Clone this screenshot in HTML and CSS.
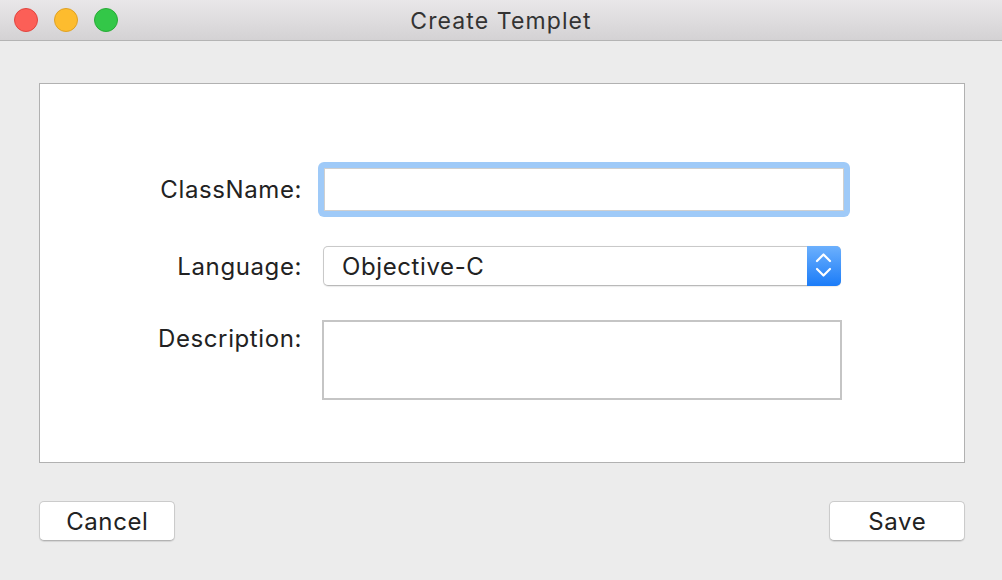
FILE: index.html
```html
<!DOCTYPE html>
<html>
<head>
<meta charset="utf-8">
<link rel="stylesheet" href="styles.css">
</head>
<body>
<div class="window">
  <div class="titlebar">
    <div class="lights">
      <span class="light red"></span>
      <span class="light yellow"></span>
      <span class="light green"></span>
    </div>
    <div class="title">Create Templet</div>
  </div>
  <div class="content">
    <div class="panel">
      <div class="row row-class">
        <div class="label">ClassName:</div>
        <div class="focus-ring"><div class="text-field"></div></div>
      </div>
      <div class="row row-lang">
        <div class="label">Language:</div>
        <div class="popup">
          <span class="popup-text">Objective-C</span>
          <span class="stepper">
            <svg width="34" height="39" viewBox="0 0 34 39">
              <polyline points="10,15 16.5,8.5 23,15" fill="none" stroke="#fff" stroke-width="2.2" stroke-linecap="round" stroke-linejoin="round"/>
              <polyline points="10,23 16.5,29.5 23,23" fill="none" stroke="#fff" stroke-width="2.2" stroke-linecap="round" stroke-linejoin="round"/>
            </svg>
          </span>
        </div>
      </div>
      <div class="row row-desc">
        <div class="label label-top">Description:</div>
        <div class="textarea"></div>
      </div>
    </div>
    <div class="buttons">
      <div class="button">Cancel</div>
      <div class="button">Save</div>
    </div>
  </div>
</div>
</body>
</html>
```
FILE: styles.css
```css
* { box-sizing: border-box; }
html, body {
  margin: 0;
  padding: 0;
  width: 1002px;
  height: 580px;
  overflow: hidden;
  background: #ececec;
  font-family: Inter, "Liberation Sans", sans-serif;
  color: #222;
}
.window {
  width: 1002px;
  height: 580px;
  display: flex;
  flex-direction: column;
  background: #ececec;
}
.titlebar {
  height: 41px;
  flex: none;
  position: relative;
  background: linear-gradient(#e9e7e9, #d4d2d4);
  border-bottom: 1px solid #b4b4b4;
  display: flex;
  align-items: center;
  justify-content: center;
}
.lights {
  position: absolute;
  left: 14px;
  top: 8px;
  display: flex;
  gap: 16px;
}
.light {
  width: 24px;
  height: 24px;
  border-radius: 50%;
  display: block;
}
.red { background: #fc5f57; border: 1px solid #e1453f; }
.yellow { background: #fdbc2e; border: 1px solid #dfa124; }
.green { background: #33c748; border: 1px solid #28ab36; }
.title {
  font-size: 23px;
  letter-spacing: 1.1px;
  color: #333;
  margin-top: 1px;
}
.content {
  flex: 1;
  padding: 42px 37px 0 39px;
  display: flex;
  flex-direction: column;
}
.panel {
  height: 380px;
  background: #fff;
  border: 1px solid #b1b1b1;
  padding-top: 78px;
  display: flex;
  flex-direction: column;
}
.row {
  display: flex;
}
.label {
  width: 262px;
  text-align: right;
  font-size: 24px;
  letter-spacing: 0.6px;
  flex: none;
}
.row-class { align-items: center; }
.row-lang { align-items: center; margin-top: 29px; }
.row-desc { margin-top: 34px; }
.focus-ring {
  margin-left: 16px;
  width: 532px;
  height: 55px;
  background: #9fcaf8;
  border-radius: 6px;
  padding: 6px;
}
.text-field {
  width: 100%;
  height: 100%;
  background: #fff;
  border: 1px solid #cfcfcf;
}
.popup {
  margin-left: 21px;
  width: 518px;
  height: 40px;
  border: 1px solid #c9c9c9;
  border-bottom-color: #b9b9b9;
  border-radius: 5px;
  background: #fff;
  display: flex;
  align-items: center;
  justify-content: space-between;
  box-shadow: 0 0.5px 1px rgba(0,0,0,0.08);
}
.popup-text {
  font-size: 24px;
  letter-spacing: 0.6px;
  padding-left: 18px;
}
.stepper {
  width: 34px;
  height: 40px;
  margin: -1px -1px -1px 0;
  border-radius: 0 5px 5px 0;
  background: linear-gradient(#6cb0fd, #1b7cf8);
  display: flex;
}
.label-top {
  padding-top: 4px;
}
.textarea {
  margin-left: 20px;
  width: 520px;
  height: 80px;
  border: 2px solid #c5c5c5;
  background: #fff;
}
.buttons {
  margin-top: 38px;
  display: flex;
  justify-content: space-between;
}
.button {
  width: 136px;
  height: 40px;
  background: #fff;
  border: 1px solid #cbcbcb;
  border-bottom-color: #b3b3b3;
  border-radius: 5px;
  box-shadow: 0 1px 1px rgba(0,0,0,0.1);
  display: flex;
  align-items: center;
  justify-content: center;
  font-size: 24px;
  letter-spacing: 0.6px;
  text-indent: 0.6px;
  color: #222;
}
```
